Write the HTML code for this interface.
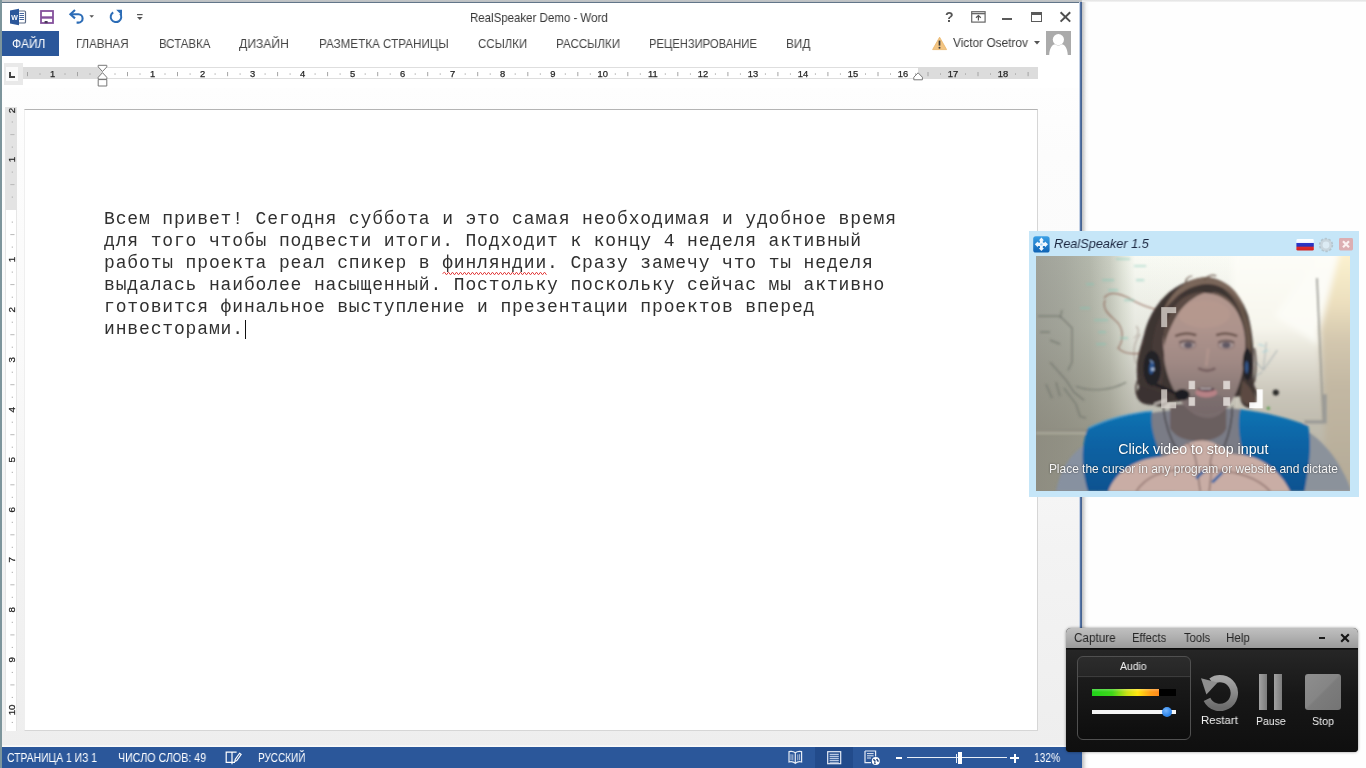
<!DOCTYPE html>
<html lang="ru">
<head>
<meta charset="utf-8">
<title>RealSpeaker Demo - Word</title>
<style>
*{box-sizing:border-box;margin:0;padding:0}
html,body{width:1366px;height:768px;overflow:hidden;background:#fefefe;font-family:"Liberation Sans",sans-serif;}
.abs{position:absolute}
svg{will-change:transform}
#word{position:absolute;left:0;top:0;width:1082px;height:768px;background:#fff;overflow:hidden}
#topstrip{position:absolute;left:0;top:0;width:1082px;height:3px;background:linear-gradient(#c2c5c7 0,#bcc0c3 55%,#5a6d80 70%,#6b7f94 100%)}
#leftb{position:absolute;left:0;top:0;width:2px;height:768px;background:#7d959c}
#rightb{position:absolute;left:1079.4px;top:2px;width:2.6px;height:745px;background:linear-gradient(90deg,#e6edf6 0,#a9bbd6 30%,#3f629a 55%,#4a648c 100%)}
#rshadow{position:absolute;left:1082px;top:2px;width:7px;height:766px;background:linear-gradient(90deg,rgba(120,120,120,.45),rgba(200,200,200,.15) 60%,rgba(255,255,255,0))}
#topright{position:absolute;left:1082px;top:0;width:284px;height:2px;background:linear-gradient(#e2e2e2,#f4f4f4)}
.tt{position:absolute;will-change:transform;white-space:nowrap;color:#444;line-height:1}
.tab{position:absolute;will-change:transform;top:37.1px;font-size:12.4px;color:#444;white-space:nowrap;line-height:14px}
#file{position:absolute;left:2px;top:31px;width:57px;height:25px;background:#2b579a}
#docbg{position:absolute;left:2px;top:88px;width:1077px;height:660px;background:linear-gradient(#fefefe 0,#fcfcfc 10%,#fafafa 40%,#f3f3f3 70%,#eeeeee 100%)}
#page{position:absolute;left:24px;top:109px;width:1014px;height:622px;background:#fff;border:1px solid #d6d6d6;border-top-color:#b4b4b4;border-left-color:#efefef}
#doc{position:absolute;left:104px;top:208.3px;font-family:"Liberation Mono","DejaVu Sans Mono",monospace;font-size:18px;letter-spacing:.858px;line-height:22px;will-change:transform;color:#303030;white-space:pre}
#status{position:absolute;left:2px;top:747px;width:1080px;height:21px;background:#2b579a}
.st{position:absolute;will-change:transform;top:752px;font-size:12px;color:#fff;white-space:nowrap;line-height:12px}
</style>
</head>
<body>
<div id="word">
  <div id="topstrip"></div>
  <div id="docbg"></div>
  <div id="page"></div>
    <!-- quick access toolbar -->
  <svg class="abs" style="left:9px;top:8px" width="18" height="18" viewBox="0 0 18 18">
    <rect x="8" y="3" width="8.5" height="12" rx="1" fill="#fff" stroke="#5a6a86" stroke-width="1.2"/>
    <path d="M10.5 5.5h4.5M10.5 7.5h4.5M10.5 9.5h4.5M10.5 11.5h4.5" stroke="#44649c" stroke-width="1"/>
    <path d="M1 2.6 L10 0.8 V17.2 L1 15.4Z" fill="#2b579a"/>
    <text x="2.2" y="12" font-family="Liberation Sans,sans-serif" font-weight="bold" font-size="7.6" fill="#fff" textLength="6.6" lengthAdjust="spacingAndGlyphs">W</text>
  </svg>
  <svg class="abs" style="left:40px;top:10px" width="15" height="14" viewBox="0 0 15 14">
    <rect x="1" y="1" width="12" height="12" fill="#fff" stroke="#84509c" stroke-width="1.8"/>
    <path d="M1 7.5h12" stroke="#84509c" stroke-width="2.4"/>
    <rect x="4.6" y="11" width="3" height="2.2" fill="#4a3a5a"/>
  </svg>
  <svg class="abs" style="left:68px;top:9px" width="28" height="15" viewBox="0 0 28 15">
    <path d="M3 5.2 H10.4 a4.2 4.2 0 0 1 0 8.4 H8.6" fill="none" stroke="#2c6cb6" stroke-width="2.1"/>
    <path d="M7 1 L2.4 5.2 L7 9.4" fill="none" stroke="#2c6cb6" stroke-width="2.1"/>
    <path d="M21.4 6.3h4.6l-2.3 2.5z" fill="#555"/>
  </svg>
  <svg class="abs" style="left:108px;top:9px" width="16" height="15" viewBox="0 0 16 15">
    <path d="M5.2 3.3 A5.3 5.3 0 1 0 12.2 4.6" fill="none" stroke="#2c6cb6" stroke-width="2"/>
    <path d="M8.2 0.8H14V6.6Z" fill="#2c6cb6"/>
  </svg>
  <svg class="abs" style="left:136px;top:13px" width="8" height="9" viewBox="0 0 8 9">
    <path d="M1 1.6h5.6" stroke="#555" stroke-width="1.2"/><path d="M1 4h5.6l-2.8 3z" fill="#555"/>
  </svg>
  <div class="tt" id="title" style="left:470px;top:12.4px;font-size:12.6px;transform:scaleX(.912);transform-origin:0 0;color:#353535">RealSpeaker Demo - Word</div>
  <!-- window controls -->
  <div class="tt" style="left:944.5px;top:9.5px;font-size:14px;font-weight:bold;color:#555">?</div>
  <svg class="abs" style="left:971px;top:11px" width="15" height="12" viewBox="0 0 15 12">
    <rect x=".7" y=".7" width="13.4" height="10.4" fill="none" stroke="#666" stroke-width="1.2"/>
    <path d="M.7 2.6h13.4" stroke="#666" stroke-width="1.4"/>
    <path d="M7.4 9.6V5M5 6.8l2.4-2.3 2.4 2.3" fill="none" stroke="#555" stroke-width="1.2"/>
  </svg>
  <div class="abs" style="left:1002px;top:18px;width:10px;height:2px;background:#5a5a5a"></div>
  <div class="abs" style="left:1031px;top:12px;width:11px;height:10px;border:1.3px solid #5a5a5a;border-top-width:3px"></div>
  <svg class="abs" style="left:1059px;top:11px" width="13" height="12" viewBox="0 0 13 12">
    <path d="M1.6 1.2 L11.2 10.6 M11.2 1.2 L1.6 10.6" stroke="#4f4f4f" stroke-width="2"/>
  </svg>
  <!-- account -->
  <svg class="abs" style="left:931px;top:36px" width="17" height="15" viewBox="0 0 17 15">
    <path d="M8.6 1.2 L15.6 13.6 H1.6Z" fill="#f3c583" stroke="#eab56a" stroke-width=".8" stroke-linejoin="round"/>
    <path d="M8.5 4.6v5" stroke="#3a3a3a" stroke-width="1.7"/><circle cx="8.5" cy="11.7" r="1" fill="#3a3a3a"/>
  </svg>
  <div class="tt" style="left:952.5px;top:36.5px;font-size:12.6px;transform:scaleX(.942);transform-origin:0 0;color:#3a3a3a">Victor Osetrov</div>
  <svg class="abs" style="left:1033px;top:40px" width="8" height="6" viewBox="0 0 8 6"><path d="M1 1h6L4 4.4z" fill="#555"/></svg>
  <svg class="abs" style="left:1046px;top:31px" width="25" height="24" viewBox="0 0 25 24">
    <rect width="25" height="24" fill="#ababab"/>
    <circle cx="12.4" cy="8.6" r="5.6" fill="#fff"/>
    <path d="M3.2 24 C3.6 17 6 13.6 9.2 13.2 Q12.4 15.8 15.6 13.2 C19 13.6 21.4 17 21.8 24Z" fill="#fff"/>
  </svg>

    <div id="file"></div>
  <div class="tab" style="left:12.3px;color:#fff;transform:scaleX(.97);transform-origin:0 0">ФАЙЛ</div>
  <div class="tab" style="left:76.4px;transform:scaleX(.923);transform-origin:0 0">ГЛАВНАЯ</div>
  <div class="tab" style="left:158.6px;transform:scaleX(.926);transform-origin:0 0">ВСТАВКА</div>
  <div class="tab" style="left:239.1px;transform:scaleX(.98);transform-origin:0 0">ДИЗАЙН</div>
  <div class="tab" style="left:318.8px;transform:scaleX(.94);transform-origin:0 0">РАЗМЕТКА СТРАНИЦЫ</div>
  <div class="tab" style="left:477.7px;transform:scaleX(.925);transform-origin:0 0">ССЫЛКИ</div>
  <div class="tab" style="left:555.9px;transform:scaleX(.933);transform-origin:0 0">РАССЫЛКИ</div>
  <div class="tab" style="left:649px;transform:scaleX(.905);transform-origin:0 0">РЕЦЕНЗИРОВАНИЕ</div>
  <div class="tab" style="left:786.4px;transform:scaleX(.95);transform-origin:0 0">ВИД</div>

  <div class="abs" style="left:3.5px;top:63px;width:19.5px;height:21.5px;background:#e9e9e9"></div>
<div class="abs" style="left:5.5px;top:66.5px;width:12.5px;height:14.5px;background:#fbfbfb"></div>
<div class="abs" style="left:9.4px;top:72px;width:2px;height:5.6px;background:#444"></div><div class="abs" style="left:9.4px;top:75.8px;width:5.6px;height:1.9px;background:#444"></div>
<div class="abs" style="left:23px;top:67px;width:1014.5px;height:11.5px;background:#dcdcdc"></div>
<div class="abs" style="left:102.5px;top:67px;width:815.5px;height:11.5px;background:#fff;border-top:1px solid #dedede;border-bottom:1px solid #dedede"></div>
<svg class="abs" style="left:0;top:60px" width="1082" height="30" viewBox="0 0 1082 30" font-family="Liberation Sans,sans-serif" font-size="9.4" fill="#262626" text-anchor="middle"><text stroke="#262626" stroke-width=".25" x="52.5" y="16.8">1</text><rect x="27.0" y="12" width="1" height="4.2" fill="#a4a4a4"/><rect x="39.5" y="13.4" width="1" height="1.3" fill="#a4a4a4"/><rect x="64.5" y="13.4" width="1" height="1.3" fill="#a4a4a4"/><rect x="77.0" y="12" width="1" height="4.2" fill="#a4a4a4"/><rect x="89.5" y="13.4" width="1" height="1.3" fill="#a4a4a4"/><rect x="114.5" y="13.4" width="1" height="1.3" fill="#a4a4a4"/><rect x="127.0" y="12" width="1" height="4.2" fill="#a4a4a4"/><rect x="139.5" y="13.4" width="1" height="1.3" fill="#a4a4a4"/><text stroke="#262626" stroke-width=".25" x="152.5" y="16.8">1</text><rect x="164.5" y="13.4" width="1" height="1.3" fill="#a4a4a4"/><rect x="177.0" y="12" width="1" height="4.2" fill="#a4a4a4"/><rect x="189.6" y="13.4" width="1" height="1.3" fill="#a4a4a4"/><text stroke="#262626" stroke-width=".25" x="202.6" y="16.8">2</text><rect x="214.6" y="13.4" width="1" height="1.3" fill="#a4a4a4"/><rect x="227.1" y="12" width="1" height="4.2" fill="#a4a4a4"/><rect x="239.6" y="13.4" width="1" height="1.3" fill="#a4a4a4"/><text stroke="#262626" stroke-width=".25" x="252.6" y="16.8">3</text><rect x="264.6" y="13.4" width="1" height="1.3" fill="#a4a4a4"/><rect x="277.1" y="12" width="1" height="4.2" fill="#a4a4a4"/><rect x="289.6" y="13.4" width="1" height="1.3" fill="#a4a4a4"/><text stroke="#262626" stroke-width=".25" x="302.6" y="16.8">4</text><rect x="314.6" y="13.4" width="1" height="1.3" fill="#a4a4a4"/><rect x="327.1" y="12" width="1" height="4.2" fill="#a4a4a4"/><rect x="339.6" y="13.4" width="1" height="1.3" fill="#a4a4a4"/><text stroke="#262626" stroke-width=".25" x="352.6" y="16.8">5</text><rect x="364.7" y="13.4" width="1" height="1.3" fill="#a4a4a4"/><rect x="377.2" y="12" width="1" height="4.2" fill="#a4a4a4"/><rect x="389.7" y="13.4" width="1" height="1.3" fill="#a4a4a4"/><text stroke="#262626" stroke-width=".25" x="402.7" y="16.8">6</text><rect x="414.7" y="13.4" width="1" height="1.3" fill="#a4a4a4"/><rect x="427.2" y="12" width="1" height="4.2" fill="#a4a4a4"/><rect x="439.7" y="13.4" width="1" height="1.3" fill="#a4a4a4"/><text stroke="#262626" stroke-width=".25" x="452.7" y="16.8">7</text><rect x="464.7" y="13.4" width="1" height="1.3" fill="#a4a4a4"/><rect x="477.2" y="12" width="1" height="4.2" fill="#a4a4a4"/><rect x="489.7" y="13.4" width="1" height="1.3" fill="#a4a4a4"/><text stroke="#262626" stroke-width=".25" x="502.7" y="16.8">8</text><rect x="514.7" y="13.4" width="1" height="1.3" fill="#a4a4a4"/><rect x="527.3" y="12" width="1" height="4.2" fill="#a4a4a4"/><rect x="539.8" y="13.4" width="1" height="1.3" fill="#a4a4a4"/><text stroke="#262626" stroke-width=".25" x="552.8" y="16.8">9</text><rect x="564.8" y="13.4" width="1" height="1.3" fill="#a4a4a4"/><rect x="577.3" y="12" width="1" height="4.2" fill="#a4a4a4"/><rect x="589.8" y="13.4" width="1" height="1.3" fill="#a4a4a4"/><text stroke="#262626" stroke-width=".25" x="602.8" y="16.8">10</text><rect x="614.8" y="13.4" width="1" height="1.3" fill="#a4a4a4"/><rect x="627.3" y="12" width="1" height="4.2" fill="#a4a4a4"/><rect x="639.8" y="13.4" width="1" height="1.3" fill="#a4a4a4"/><text stroke="#262626" stroke-width=".25" x="652.8" y="16.8">11</text><rect x="664.8" y="13.4" width="1" height="1.3" fill="#a4a4a4"/><rect x="677.3" y="12" width="1" height="4.2" fill="#a4a4a4"/><rect x="689.9" y="13.4" width="1" height="1.3" fill="#a4a4a4"/><text stroke="#262626" stroke-width=".25" x="702.9" y="16.8">12</text><rect x="714.9" y="13.4" width="1" height="1.3" fill="#a4a4a4"/><rect x="727.4" y="12" width="1" height="4.2" fill="#a4a4a4"/><rect x="739.9" y="13.4" width="1" height="1.3" fill="#a4a4a4"/><text stroke="#262626" stroke-width=".25" x="752.9" y="16.8">13</text><rect x="764.9" y="13.4" width="1" height="1.3" fill="#a4a4a4"/><rect x="777.4" y="12" width="1" height="4.2" fill="#a4a4a4"/><rect x="789.9" y="13.4" width="1" height="1.3" fill="#a4a4a4"/><text stroke="#262626" stroke-width=".25" x="802.9" y="16.8">14</text><rect x="814.9" y="13.4" width="1" height="1.3" fill="#a4a4a4"/><rect x="827.4" y="12" width="1" height="4.2" fill="#a4a4a4"/><rect x="839.9" y="13.4" width="1" height="1.3" fill="#a4a4a4"/><text stroke="#262626" stroke-width=".25" x="853.0" y="16.8">15</text><rect x="865.0" y="13.4" width="1" height="1.3" fill="#a4a4a4"/><rect x="877.5" y="12" width="1" height="4.2" fill="#a4a4a4"/><rect x="890.0" y="13.4" width="1" height="1.3" fill="#a4a4a4"/><text stroke="#262626" stroke-width=".25" x="903.0" y="16.8">16</text><rect x="915.0" y="13.4" width="1" height="1.3" fill="#a4a4a4"/><rect x="927.5" y="12" width="1" height="4.2" fill="#a4a4a4"/><rect x="940.0" y="13.4" width="1" height="1.3" fill="#a4a4a4"/><text stroke="#262626" stroke-width=".25" x="953.0" y="16.8">17</text><rect x="965.0" y="13.4" width="1" height="1.3" fill="#a4a4a4"/><rect x="977.5" y="12" width="1" height="4.2" fill="#a4a4a4"/><rect x="990.0" y="13.4" width="1" height="1.3" fill="#a4a4a4"/><text stroke="#262626" stroke-width=".25" x="1003.0" y="16.8">18</text><rect x="1015.0" y="13.4" width="1" height="1.3" fill="#a4a4a4"/><rect x="1027.6" y="12" width="1" height="4.2" fill="#a4a4a4"/><path d="M98.2 5.3 h8.6 v1.6 l-4.3 4.6 l-4.3 -4.6z M98.2 19.2 v-1.9 l4.3 -4.6 l4.3 4.6 v1.9z M98.2 19.6 h8.6 v6.4 h-8.6z" fill="#fff" stroke="#777" stroke-width="1"/><path d="M913.8 19.8 v-2.6 l4.3 -4.4 l4.3 4.4 v2.6z" fill="#fff" stroke="#777" stroke-width="1"/></svg>

  <div class="abs" style="left:4.5px;top:107px;width:12.5px;height:624px;background:#e3e3e3"></div>
<div class="abs" style="left:4.5px;top:209.6px;width:12.5px;height:521.4px;background:#fff;border-left:1px solid #e6e6e6;border-right:1px solid #e6e6e6"></div>
<svg class="abs" style="left:0;top:100px" width="24" height="640" viewBox="0 100 24 640" font-family="Liberation Sans,sans-serif" font-size="9.8" fill="#222" text-anchor="middle"><text stroke="#262626" stroke-width=".25" transform="translate(15.2,110.5) rotate(-90)" x="0" y="0">2</text><rect x="11.7" y="121.5" width="1.3" height="1" fill="#b0b0b0"/><rect x="10.3" y="134.1" width="4.2" height="1" fill="#b8b8b8"/><rect x="11.7" y="146.6" width="1.3" height="1" fill="#b0b0b0"/><text stroke="#262626" stroke-width=".25" transform="translate(15.2,159.6) rotate(-90)" x="0" y="0">1</text><rect x="11.7" y="171.6" width="1.3" height="1" fill="#b0b0b0"/><rect x="10.3" y="184.1" width="4.2" height="1" fill="#b8b8b8"/><rect x="11.7" y="196.6" width="1.3" height="1" fill="#b0b0b0"/><rect x="11.7" y="221.6" width="1.3" height="1" fill="#b0b0b0"/><rect x="10.3" y="234.1" width="4.2" height="1" fill="#b8b8b8"/><rect x="11.7" y="246.6" width="1.3" height="1" fill="#b0b0b0"/><text stroke="#262626" stroke-width=".25" transform="translate(15.2,259.6) rotate(-90)" x="0" y="0">1</text><rect x="11.7" y="271.6" width="1.3" height="1" fill="#b0b0b0"/><rect x="10.3" y="284.1" width="4.2" height="1" fill="#b8b8b8"/><rect x="11.7" y="296.7" width="1.3" height="1" fill="#b0b0b0"/><text stroke="#262626" stroke-width=".25" transform="translate(15.2,309.7) rotate(-90)" x="0" y="0">2</text><rect x="11.7" y="321.7" width="1.3" height="1" fill="#b0b0b0"/><rect x="10.3" y="334.2" width="4.2" height="1" fill="#b8b8b8"/><rect x="11.7" y="346.7" width="1.3" height="1" fill="#b0b0b0"/><text stroke="#262626" stroke-width=".25" transform="translate(15.2,359.7) rotate(-90)" x="0" y="0">3</text><rect x="11.7" y="371.7" width="1.3" height="1" fill="#b0b0b0"/><rect x="10.3" y="384.2" width="4.2" height="1" fill="#b8b8b8"/><rect x="11.7" y="396.7" width="1.3" height="1" fill="#b0b0b0"/><text stroke="#262626" stroke-width=".25" transform="translate(15.2,409.7) rotate(-90)" x="0" y="0">4</text><rect x="11.7" y="421.7" width="1.3" height="1" fill="#b0b0b0"/><rect x="10.3" y="434.2" width="4.2" height="1" fill="#b8b8b8"/><rect x="11.7" y="446.7" width="1.3" height="1" fill="#b0b0b0"/><text stroke="#262626" stroke-width=".25" transform="translate(15.2,459.8) rotate(-90)" x="0" y="0">5</text><rect x="11.7" y="471.8" width="1.3" height="1" fill="#b0b0b0"/><rect x="10.3" y="484.3" width="4.2" height="1" fill="#b8b8b8"/><rect x="11.7" y="496.8" width="1.3" height="1" fill="#b0b0b0"/><text stroke="#262626" stroke-width=".25" transform="translate(15.2,509.8) rotate(-90)" x="0" y="0">6</text><rect x="11.7" y="521.8" width="1.3" height="1" fill="#b0b0b0"/><rect x="10.3" y="534.3" width="4.2" height="1" fill="#b8b8b8"/><rect x="11.7" y="546.8" width="1.3" height="1" fill="#b0b0b0"/><text stroke="#262626" stroke-width=".25" transform="translate(15.2,559.8) rotate(-90)" x="0" y="0">7</text><rect x="11.7" y="571.8" width="1.3" height="1" fill="#b0b0b0"/><rect x="10.3" y="584.3" width="4.2" height="1" fill="#b8b8b8"/><rect x="11.7" y="596.8" width="1.3" height="1" fill="#b0b0b0"/><text stroke="#262626" stroke-width=".25" transform="translate(15.2,609.8) rotate(-90)" x="0" y="0">8</text><rect x="11.7" y="621.8" width="1.3" height="1" fill="#b0b0b0"/><rect x="10.3" y="634.4" width="4.2" height="1" fill="#b8b8b8"/><rect x="11.7" y="646.9" width="1.3" height="1" fill="#b0b0b0"/><text stroke="#262626" stroke-width=".25" transform="translate(15.2,659.9) rotate(-90)" x="0" y="0">9</text><rect x="11.7" y="671.9" width="1.3" height="1" fill="#b0b0b0"/><rect x="10.3" y="684.4" width="4.2" height="1" fill="#b8b8b8"/><rect x="11.7" y="696.9" width="1.3" height="1" fill="#b0b0b0"/><text stroke="#262626" stroke-width=".25" transform="translate(15.2,709.9) rotate(-90)" x="0" y="0">10</text><rect x="11.7" y="721.9" width="1.3" height="1" fill="#b0b0b0"/></svg>

  <div id="doc">Всем привет! Сегодня суббота и это самая необходимая и удобное время
для того чтобы подвести итоги. Подходит к концу 4 неделя активный
работы проекта реал спикер в <span id="sq">финляндии</span>. Сразу замечу что ты неделя
выдалась наиболее насыщенный. Постольку поскольку сейчас мы активно
готовится финальное выступление и презентации проектов вперед
инвесторами.</div>
  <svg class="abs" style="left:0;top:0" width="1082" height="400" viewBox="0 0 1082 400"><path d="M442.5 273.6 L444.5 272.2 L446.5 274.8 L448.5 272.2 L450.5 274.8 L452.5 272.2 L454.5 274.8 L456.5 272.2 L458.5 274.8 L460.5 272.2 L462.5 274.8 L464.5 272.2 L466.5 274.8 L468.5 272.2 L470.5 274.8 L472.5 272.2 L474.5 274.8 L476.5 272.2 L478.5 274.8 L480.5 272.2 L482.5 274.8 L484.5 272.2 L486.5 274.8 L488.5 272.2 L490.5 274.8 L492.5 272.2 L494.5 274.8 L496.5 272.2 L498.5 274.8 L500.5 272.2 L502.5 274.8 L504.5 272.2 L506.5 274.8 L508.5 272.2 L510.5 274.8 L512.5 272.2 L514.5 274.8 L516.5 272.2 L518.5 274.8 L520.5 272.2 L522.5 274.8 L524.5 272.2 L526.5 274.8 L528.5 272.2 L530.5 274.8 L532.5 272.2 L534.5 274.8 L536.5 272.2 L538.5 274.8 L540.5 272.2 L542.5 274.8 L544.5 272.2 L546.5 274.8" fill="none" stroke="#e23a3a" stroke-width="1"/></svg>
  <div class="abs" style="left:244.6px;top:320px;width:1.2px;height:19px;background:#111"></div>
  <div id="wstrip" class="abs" style="left:2px;top:744.6px;width:1078px;height:2.6px;background:linear-gradient(#f3f3f3,#fcfcfc)"></div>
  <div id="status"></div>
    <div class="st" style="left:7.3px;transform:scaleX(.864);transform-origin:0 0">СТРАНИЦА 1 ИЗ 1</div>
  <div class="st" style="left:117.7px;transform:scaleX(.891);transform-origin:0 0">ЧИСЛО СЛОВ: 49</div>
  <svg class="abs" style="left:225px;top:750px" width="18" height="15" viewBox="0 0 18 15">
    <path d="M1.2 2.2 H7 V12.4 H1.2Z M7 2.2 H11.6 M7 12.4 h3" fill="none" stroke="#fff" stroke-width="1.2"/>
    <path d="M10.2 9.4 L14.6 3.2 L16.2 4.4 L11.8 10.6 L9.8 11.6Z" fill="none" stroke="#fff" stroke-width="1.1"/>
    <path d="M7 12.4v1.8" stroke="#fff" stroke-width="1.2"/>
  </svg>
  <div class="st" style="left:257.7px;transform:scaleX(.833);transform-origin:0 0">РУССКИЙ</div>
  <svg class="abs" style="left:788px;top:750px" width="15" height="15" viewBox="0 0 15 15">
    <path d="M1 1.6 C3.4 1 5.6 1.4 7.3 2.8 C9 1.4 11.2 1 13.6 1.6 V12 C11.2 11.4 9 11.8 7.3 13.4 C5.6 11.8 3.4 11.4 1 12Z M7.3 2.8V13.4" fill="none" stroke="#e6ecf5" stroke-width="1.2"/>
    <path d="M3 4.2v6M4.8 4.4v6M9.8 4.4v6M11.6 4.2v6" stroke="#cfd9ea" stroke-width=".8"/>
  </svg>
  <div class="abs" style="left:815px;top:747px;width:38px;height:21px;background:#224b8b"></div>
  <svg class="abs" style="left:827px;top:751px" width="15" height="14" viewBox="0 0 15 14">
    <rect x=".7" y=".7" width="13" height="12" fill="none" stroke="#e6ecf5" stroke-width="1.2"/>
    <path d="M2.6 3.4h9.2M2.6 5.4h9.2M2.6 7.4h9.2M2.6 9.4h9.2M2.6 11.2h9.2" stroke="#b9c9e4" stroke-width="1.1"/>
  </svg>
  <svg class="abs" style="left:864px;top:750px" width="17" height="16" viewBox="0 0 17 16">
    <path d="M1 1H11.6V6.6M1 1V12.6H7" fill="none" stroke="#e6ecf5" stroke-width="1.2"/>
    <path d="M3 3.6h6.6M3 5.8h6.6M3 8h4" stroke="#dfe6f2" stroke-width="1"/>
    <circle cx="11.8" cy="11" r="4" fill="#fff"/>
    <path d="M9.4 9.2l2 2.2M12.6 9l1.8 2.6M10.2 12.6l1.4 1" fill="none" stroke="#24467e" stroke-width="1.5"/>
  </svg>
  <div class="abs" style="left:896.4px;top:757px;width:6px;height:2px;background:#fff"></div>
  <div class="abs" style="left:907px;top:757.3px;width:99.5px;height:1.2px;background:#e8eef7"></div>
  <div class="abs" style="left:956px;top:753.5px;width:1.2px;height:9px;background:#e8eef7"></div>
  <div class="abs" style="left:958px;top:752px;width:4px;height:11.6px;background:#fff"></div>
  <div class="abs" style="left:1010px;top:757px;width:9px;height:2px;background:#fff"></div>
  <div class="abs" style="left:1013.5px;top:753.5px;width:2px;height:9px;background:#fff"></div>
  <div class="st" style="left:1033.8px;transform:scaleX(.853);transform-origin:0 0">132%</div>

  <div id="leftb"></div>
  <div id="rightb"></div>
</div>
<div id="rshadow"></div>
<div id="topright"></div>
<div id="rs" class="abs" style="left:1029px;top:231px;width:329.6px;height:265.6px;background:#c6e6f8">
  <svg class="abs" style="left:4.4px;top:5px" width="17" height="17" viewBox="0 0 17 17">
    <defs><linearGradient id="rsi" x1="0" y1="0" x2="0" y2="1"><stop offset="0" stop-color="#3aa0e6"/><stop offset="1" stop-color="#0e62b4"/></linearGradient></defs>
    <rect x=".2" y=".2" width="16.4" height="16.4" rx="2.6" fill="url(#rsi)"/>
    <g fill="#f2f8fe"><path d="M8.4 1.6l2.6 2.8-1.2.2.1 2.2 2-.2.1-1.2 3 2.9-3 3-.1-1.3-2-.1-.1 2.2 1.2.1-2.6 2.9-2.6-2.9 1.2-.1-.1-2.2-2 .1-.1 1.3-3-3 3-2.9.1 1.2 2 .2.1-2.2-1.2-.2z"/></g><circle cx="8.4" cy="8.4" r="1.2" fill="#9fd0f4"/>
  </svg>
  <div class="tt" style="left:25px;top:6.2px;font-size:13px;font-style:italic;color:#1c2740;transform:scaleX(.98);transform-origin:0 0">RealSpeaker 1.5</div>
  <svg class="abs" style="left:266px;top:6.5px" width="20" height="14" viewBox="0 0 20 14">
    <defs><linearGradient id="fl" x1="0" y1="0" x2="0" y2="1"><stop offset="0" stop-color="#fff"/><stop offset=".3" stop-color="#f4f6ff"/><stop offset=".36" stop-color="#2a36c8"/><stop offset=".62" stop-color="#2a30b8"/><stop offset=".7" stop-color="#e02a2a"/><stop offset="1" stop-color="#d02020"/></linearGradient></defs>
    <rect x="1.4" y="1" width="17.4" height="11.6" rx="1.4" fill="url(#fl)"/>
  </svg>
  <svg class="abs" style="left:289px;top:5.5px" width="16" height="16" viewBox="0 0 16 16">
    <circle cx="8" cy="8" r="6.4" fill="#c9d6de" stroke="#b4c6d0" stroke-width="1.6" stroke-dasharray="2.4 1.6"/>
    <circle cx="8" cy="8" r="3.4" fill="#dcebf4"/>
  </svg>
  <svg class="abs" style="left:310px;top:6.8px" width="14" height="13" viewBox="0 0 14 13">
    <rect width="14" height="12.4" rx="1.4" fill="#dcaeb2"/>
    <path d="M4 3.2l6 6M10 3.2l-6 6" stroke="#fbf0f0" stroke-width="2.2"/>
  </svg>
    <svg class="abs" style="left:7.4px;top:25px" width="314.4" height="235.4" viewBox="0 0 314 235" preserveAspectRatio="none">
    <defs>
      <linearGradient id="bgx" x1="0" y1="0" x2="314" y2="0" gradientUnits="userSpaceOnUse">
        <stop offset="0" stop-color="#a0a299"/><stop offset=".09" stop-color="#a7aaa0"/><stop offset=".17" stop-color="#b3b7ab"/><stop offset=".235" stop-color="#c9cdc1"/><stop offset=".28" stop-color="#e5e9de"/><stop offset=".315" stop-color="#f8faf3"/><stop offset="1" stop-color="#fdfdf7"/>
      </linearGradient>
      <linearGradient id="bgy" x1="0" y1="0" x2="0" y2="235" gradientUnits="userSpaceOnUse">
        <stop offset="0" stop-color="#807c6e" stop-opacity="0"/><stop offset=".3" stop-color="#807c6e" stop-opacity=".14"/><stop offset=".55" stop-color="#807c6e" stop-opacity=".4"/><stop offset=".74" stop-color="#807c6e" stop-opacity=".56"/><stop offset="1" stop-color="#807c6e" stop-opacity=".56"/>
      </linearGradient>
      <linearGradient id="bgr" x1="0" y1="0" x2="0" y2="235" gradientUnits="userSpaceOnUse">
        <stop offset="0" stop-color="#fdfdf8"/><stop offset=".3" stop-color="#f7f6ed"/><stop offset=".45" stop-color="#dfdcd1"/><stop offset=".6" stop-color="#c8c4b8"/><stop offset=".72" stop-color="#bfbbae"/><stop offset="1" stop-color="#b3ad9c"/>
      </linearGradient>
      <linearGradient id="bgs" x1="0" y1="0" x2="0" y2="235" gradientUnits="userSpaceOnUse">
        <stop offset="0" stop-color="#fbf1cf"/><stop offset=".2" stop-color="#ecdfbe"/><stop offset=".36" stop-color="#d3c7ae"/><stop offset=".55" stop-color="#c3b8a3"/><stop offset="1" stop-color="#b3aa97"/>
      </linearGradient>
      <linearGradient id="skin" x1="0" y1="37" x2="0" y2="163" gradientUnits="userSpaceOnUse">
        <stop offset="0" stop-color="#b3978e"/><stop offset=".3" stop-color="#ad938c"/><stop offset=".55" stop-color="#a08984"/><stop offset=".75" stop-color="#8c7b78"/><stop offset="1" stop-color="#766a6b"/>
      </linearGradient>
      <linearGradient id="vest" x1="0" y1="150" x2="0" y2="235" gradientUnits="userSpaceOnUse">
        <stop offset="0" stop-color="#1276b4"/><stop offset=".4" stop-color="#0a65a6"/><stop offset="1" stop-color="#085290"/>
      </linearGradient>
      <filter id="bl" x="-5%" y="-5%" width="110%" height="110%"><feGaussianBlur stdDeviation="1"/></filter>
      <filter id="bl2" x="-5%" y="-5%" width="110%" height="110%"><feGaussianBlur stdDeviation=".6"/></filter>
      <filter id="bl3" x="-5%" y="-5%" width="110%" height="110%"><feGaussianBlur stdDeviation="3"/></filter>
      <clipPath id="vc"><rect width="314" height="235"/></clipPath>
    </defs>
    <g clip-path="url(#vc)">
    <rect width="314" height="235" fill="url(#bgx)"/>
    <rect width="200" height="235" fill="url(#bgy)"/>
    <g filter="url(#bl3)">
      <path d="M196 -10H330V245H196Z" fill="url(#bgr)"/>
      <path d="M238 60L290 -10H330V120Z" fill="#fdfdf8" opacity=".8"/>
      <path d="M305 -10H330V245H290L288 166L283 75Z" fill="url(#bgs)"/>
    </g>
    <g filter="url(#bl)">
      <!-- whiteboard doodles -->
      <g fill="none" stroke="#6c7068" stroke-width="1.2" opacity=".8">
        <path d="M2 60h22l12 12v34l-4 8M4 76h10M24 62l2-8M14 84l10 4"/>
        <path d="M14 106l16 18 8 12 10 8M40 130c14 6 36 4 50-4"/>
        <path d="M10 128l6 14M20 126l4 14M28 132l12 16 4 12 6 2"/>
      </g>
      <path d="M68 42c6-8 18-4 28 2s18 8 26 10M69 44c-4 10 6 16 12 22s7 18 1 26c8 8 22 6 28 2" fill="none" stroke="#8e6658" stroke-width="1.2" opacity=".85"/>
      <path d="M100 70c4 4 2 10-2 12M104 78c-6 8-8 18-4 30" fill="none" stroke="#8a7a70" stroke-width="1" opacity=".6"/>
      <g fill="none" stroke="#7cc9b4" stroke-width="2.2" opacity=".42"><path d="M80 3h14M98 10h12M100 24h8M66 24h12M72 34h10M50 28h8M44 52h10M58 64h14M88 44h10M60 88h10M84 82h8M62 76h8"/></g>
      <!-- whiteboard frame -->
      <path d="M0 174H54" stroke="#908e82" stroke-width="2.6"/>
      <path d="M0 177H54" stroke="#b4b2a4" stroke-width="2" opacity=".8"/>
      <path d="M280.6 22L287 166" stroke="#96968f" stroke-width="1.6"/>
      <path d="M268 165.6H288.6V138" fill="none" stroke="#9a9a96" stroke-width="3.4"/>
      <path d="M230 86l-3 28 14-20M227 114l-8-9M216 122l10-6" fill="none" stroke="#98a4aa" stroke-width="1" opacity=".7"/>
      <path d="M222 88l6 2M226 96l6-2" stroke="#9fd0d8" stroke-width="2" opacity=".5"/>
      <!-- sleeves -->
      <path d="M20 235C24 212 36 194 56 184L62 235Z" fill="#8791a0"/>
      <path d="M266 172C288 184 304 206 314 232V235H262Z" fill="#8b929b"/>
      <!-- hair -->
      <path d="M102 128C98 112 104 92 108 78C112 60 124 40 142 30C152 24 162 22 170 21C190 22 206 40 212 60C217 78 218 100 217 120C218 134 222 144 218 150C212 154 204 150 204 140L132 146C128 154 110 152 102 128Z" fill="#3e3432"/>
      <path d="M126 70C128 48 146 30 170 28C194 28 210 52 210 74C212 50 200 24 170 21C142 22 126 48 122 72Z" fill="#7a665a"/>
      <path d="M104 130c-6 6-4 16 6 18s20-2 22-8z" fill="#3a3030"/>
      <path d="M206 124c6 4 12 12 14 22-6 6-14 2-16-6z" fill="#5b4a42"/>
      <path d="M168 24c2-4 8-6 12-4M150 28c-2-4 2-8 6-8" stroke="#6a584e" stroke-width="1.2" fill="none"/>
      <!-- neck / shirt -->
      <path d="M110 158C130 152 200 150 208 154L216 235H102Z" fill="#7a7c86"/>
      <path d="M134 148h56v24c-6 16-46 18-56 0z" fill="#6a5e5f"/>
      <!-- face -->
      <path d="M127 94C125 64 142 37 169 37C195 37 211 62 209 94C208 112 204 128 198 140C190 154 182 162 172 162C160 162 148 152 140 138C132 124 128 110 127 94Z" fill="url(#skin)"/>
      <ellipse cx="168" cy="58" rx="26" ry="14" fill="#b99a90" opacity=".55"/>
      <ellipse cx="170" cy="147" rx="22" ry="10" fill="#74686a" opacity=".55"/>
      <!-- hair strands on face edge -->
      <path d="M128 98C124 72 132 50 148 38C136 42 118 58 116 92C115 112 118 126 124 134C128 122 128 110 128 98Z" fill="#473b38"/>
      <path d="M208 72C211 88 211 108 209 126C215 110 217 86 213 68C209 52 199 38 186 32C197 40 205 54 208 72Z" fill="#66544a"/>
      <path d="M170 36C158 40 146 48 138 64C134 72 130 80 128 90C126 70 134 48 150 40C158 36 164 36 170 36Z" fill="#5c4b44"/>
      <path d="M172 37C184 38 196 46 204 60C200 48 190 38 178 36Z" fill="#6c5a50"/>
      <path d="M108 84c-4 8-8 22-6 36M104 120c-4 6-6 14-2 22M218 92c2 10 2 22 0 34M216 128c4 6 6 12 6 18" fill="none" stroke="#4a3d3a" stroke-width="1.6"/>
      <!-- eyes / brows / nose / mouth -->
      <ellipse cx="151.5" cy="89" rx="7" ry="3" fill="#c9c0c0"/><ellipse cx="190" cy="89" rx="7" ry="3" fill="#c9c0c0"/><ellipse cx="152" cy="89" rx="4.2" ry="3" fill="#363c54"/><ellipse cx="190" cy="89" rx="4.2" ry="3" fill="#363c54"/><path d="M143 86.4q8-4 16 0M182 86.4q8-4 16 0" fill="none" stroke="#4a3c3c" stroke-width="1.6"/>
      <ellipse cx="151.5" cy="89" rx="9" ry="4.6" fill="#8a7474" opacity=".5"/><ellipse cx="190" cy="89" rx="9" ry="4.6" fill="#8a7474" opacity=".5"/>
      <path d="M139 80q10-5 21-1M180 79q10-4 21 1" fill="none" stroke="#665048" stroke-width="2.2"/>
      <path d="M162 112q9 5 17 0" fill="none" stroke="#776060" stroke-width="2.6"/>
      <path d="M172 92l-2 18" stroke="#b89a92" stroke-width="3" opacity=".6"/>
      <ellipse cx="170" cy="136.5" rx="11" ry="4.8" fill="#b78286"/><ellipse cx="170" cy="133" rx="8.4" ry="2.2" fill="#54404a"/>
      <path d="M164 132.4h11" stroke="#c8c0c0" stroke-width="1.4"/>
      <!-- headset -->
      <ellipse cx="116" cy="112" rx="8.8" ry="17.5" fill="#222228"/><path d="M114 107c1.6-2.4 4-1.6 4 3s-1.6 8-3.4 8-2.2-7-.6-11z" fill="#2b548e"/><circle cx="116.6" cy="113" r="1.7" fill="#b9cbe6"/><path d="M114 104l3 3" stroke="#8fb0e0" stroke-width="1.2"/>
      <ellipse cx="211" cy="108" rx="4.6" ry="16" fill="#222228"/><ellipse cx="210.4" cy="111" rx="1.5" ry="6.5" fill="#35598f"/>
      <path d="M119 128L140 137" stroke="#1e1e22" stroke-width="2.6"/><ellipse cx="146" cy="138.5" rx="7.4" ry="5.6" fill="#1c1c20"/>
      <path d="M118 148l12-4" stroke="#bdb6b0" stroke-width="2.4"/>
      <path d="M127 150c2 20 8 34 14 44M196 150c0 16-4 30-8 40" fill="none" stroke="#3a3436" stroke-width="1.2"/>
      <!-- vest -->
      <path d="M52 235C44 208 46 184 52 172C72 162 98 156 116 155C113 170 120 192 132 212L138 235Z" fill="url(#vest)"/>
      <path d="M52 172C72 162 98 156 116 155" fill="none" stroke="#4aa0d4" stroke-width="1.6" opacity=".7"/>
      <path d="M204 153C228 156 256 162 272 170C276 190 272 214 268 235H216C212 210 198 180 204 153Z" fill="url(#vest)"/>
      <!-- hands -->
      <path d="M72 235C80 214 100 202 128 200C140 196 150 184 166 184C180 184 188 194 198 198C224 198 244 214 254 235Z" fill="#c9ada5"/>
      <path d="M100 235c10-16 30-22 52-22M178 214c22 0 44 8 56 21" fill="none" stroke="#9c807a" stroke-width="1.8"/>
      <path d="M150 186c6 4 8 10 10 20M182 188c-6 6-8 12-8 22M160 206l4 29M176 208l-3 27" stroke="#8c7470" stroke-width="1.4" fill="none"/>
      <path d="M160 222l8-8M176 226l10-10" stroke="#1f5fa6" stroke-width="2.6"/>
      <circle cx="239.5" cy="136.3" r="3" fill="#2a2a28"/>
      <circle cx="232" cy="152" r="1.6" fill="#5a9a4a"/>
    </g>
    <!-- tracking markers -->
    <g filter="url(#bl2)">
      <path d="M125 71V51H140V57H131V71Z" fill="#cfc8c2" opacity=".85"/>
      <path d="M125 133V152H140V146H131V133Z" fill="#d8d2cc" opacity=".8"/>
      <path d="M226.5 133V152H213V146H220.5V133Z" fill="#fff" opacity=".95"/>
      <g fill="#e4dedb" opacity=".88"><rect x="152.5" y="124.6" width="6.3" height="8.4"/><rect x="152.5" y="141" width="6.3" height="8.6"/><rect x="187" y="124.6" width="6.8" height="8.4"/><rect x="187" y="141" width="6.8" height="8.6"/></g>
    </g>
    </g>
    <text x="157.2" y="197.6" text-anchor="middle" font-family="Liberation Sans,sans-serif" font-size="14.2" fill="#fff" style="text-shadow:0 0 2px rgba(0,0,0,.5)">Click video to stop input</text>
    <text x="157.2" y="216.2" text-anchor="middle" font-family="Liberation Sans,sans-serif" font-size="11.95" fill="#f4f4f4" style="text-shadow:0 0 2px rgba(0,0,0,.6)">Place the cursor in any program or website and dictate</text>
  </svg>

</div>

<div id="cap" class="abs" style="left:1066px;top:628px;width:291.5px;height:123.6px;background:#151515;border-radius:5px 5px 4px 4px;overflow:hidden;box-shadow:0 0 3px rgba(0,0,0,.45)">
  <div class="abs" style="left:0;top:0;width:100%;height:20.1px;background:linear-gradient(#c0c0c0,#b0b0b0 45%,#9a9a9a)"></div>
  <div class="abs" style="left:0;top:20.1px;width:100%;height:1.4px;background:#0c0c0c"></div>
  <div class="abs" style="left:0;top:21.5px;width:100%;height:102.1px;background:linear-gradient(#262626,#171717 45%,#0f0f0f)"></div>
  <div class="tt" style="left:8.3px;top:3.9px;font-size:12.5px;color:#262626;transform:scaleX(.937);transform-origin:0 0">Capture</div>
  <div class="tt" style="left:66px;top:3.9px;font-size:12.5px;color:#262626;transform:scaleX(.903);transform-origin:0 0">Effects</div>
  <div class="tt" style="left:117.5px;top:3.9px;font-size:12.5px;color:#262626;transform:scaleX(.894);transform-origin:0 0">Tools</div>
  <div class="tt" style="left:160.3px;top:3.9px;font-size:12.5px;color:#262626;transform:scaleX(.925);transform-origin:0 0">Help</div>
  <div class="abs" style="left:253px;top:8.5px;width:6.4px;height:2px;background:#1c1c1c"></div>
  <svg class="abs" style="left:273.6px;top:4.8px" width="10" height="10" viewBox="0 0 10 10"><path d="M1.2 1.2l7.6 7.6M8.8 1.2l-7.6 7.6" stroke="#161616" stroke-width="2.1"/></svg>
  <!-- audio panel -->
  <div class="abs" style="left:11.3px;top:28.2px;width:113.4px;height:84px;border:1px solid #505050;border-radius:6px;background:linear-gradient(#2c2c2c 0,#262626 22%,#1b1b1b 26%,#0d0d0d 100%)"></div>
  <div class="abs" style="left:12.3px;top:47.8px;width:111.4px;height:1px;background:#3c3c3c"></div>
  <div class="tt" style="left:54.2px;top:33.2px;font-size:10.6px;color:#f0f0f0;transform:scaleX(.98);transform-origin:0 0">Audio</div>
  <div class="abs" style="left:26.3px;top:60.6px;width:83.7px;height:7px;background:#000"></div>
  <div class="abs" style="left:26.3px;top:60.6px;width:66.4px;height:7px;background:linear-gradient(90deg,#1fd21a 0,#3fd61a 30%,#c8e016 52%,#ffe610 68%,#ffa218 86%,#ff8a1c 100%)"></div>
  <div class="abs" style="left:26.3px;top:60.6px;width:66.4px;height:3px;background:linear-gradient(rgba(255,255,255,.25),rgba(255,255,255,0))"></div>
  <div class="abs" style="left:26.3px;top:81.6px;width:84px;height:4.6px;background:#f4f4f4"></div>
  <div class="abs" style="left:95.6px;top:79px;width:10.4px;height:10.4px;border-radius:50%;background:radial-gradient(circle at 40% 35%,#74b6ff,#2f86ea 60%,#2a74d0)"></div>
  <!-- restart -->
  <svg class="abs" style="left:133px;top:45px" width="40" height="38" viewBox="0 0 40 38">
    <defs><linearGradient id="gr1" x1="0" y1="0" x2="0" y2="1"><stop offset="0" stop-color="#a6a6a6"/><stop offset="1" stop-color="#6c6c6c"/></linearGradient></defs>
    <path d="M12.5 8.4A14.4 14.4 0 1 1 8 26.4" fill="none" stroke="url(#gr1)" stroke-width="7.4"/>
    <path d="M2 5.2L18.6 9.4L7.4 21.4Z" fill="#8e8e8e"/>
  </svg>
  <div class="tt" style="left:134.6px;top:86px;font-size:11.6px;color:#f2f2f2;transform:scaleX(.985);transform-origin:0 0">Restart</div>
  <!-- pause -->
  <div class="abs" style="left:193.3px;top:46px;width:8.1px;height:35.8px;background:linear-gradient(90deg,#a2a2a2,#7c7c7c)"></div>
  <div class="abs" style="left:208px;top:46px;width:8.1px;height:35.8px;background:linear-gradient(90deg,#a2a2a2,#7c7c7c)"></div>
  <div class="tt" style="left:189.9px;top:86.6px;font-size:11.6px;color:#f2f2f2;transform:scaleX(.9);transform-origin:0 0">Pause</div>
  <!-- stop -->
  <div class="abs" style="left:238.5px;top:46px;width:36.5px;height:35.8px;border-radius:3px;background:linear-gradient(135deg,#8e8e8e 0,#858585 48%,#7c7c7c 52%,#747474 100%)"></div>
  <div class="tt" style="left:246px;top:86.6px;font-size:11.6px;color:#f2f2f2;transform:scaleX(.92);transform-origin:0 0">Stop</div>
</div>

</body>
</html>
